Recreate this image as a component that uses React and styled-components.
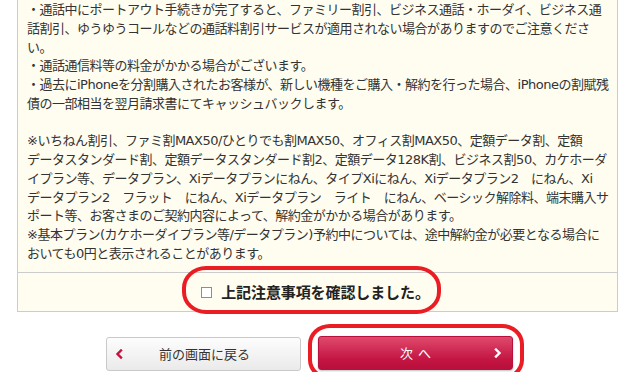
import React from "react";
import styled, { createGlobalStyle } from "styled-components";

const Global = createGlobalStyle`
  html, body { margin: 0; padding: 0; background: #ffffff; }
  body { font-family: "DejaVu Sans", "Noto Sans CJK JP", sans-serif; color: #333; overflow: hidden; }
`;

const Page = styled.div`
  width: 630px;
  height: 372px;
  overflow: hidden;
  display: flex;
  flex-direction: column;
`;

const Panel = styled.div`
  margin: 0 12px 0 17px;
  background: #fffdef;
  border: 1px solid #cccccc;
  border-top: none;
  display: flex;
  flex-direction: column;
`;

const Notes = styled.div`
  padding: 1px 0 8px 9px;
  font-size: 13px;
  letter-spacing: -0.5px;
  line-height: 18.75px;
  color: #333;
  white-space: nowrap;
`;

const Line = styled.div`
  min-height: 18.75px;
`;

const ConfirmRow = styled.div`
  position: relative;
  border-top: 1px solid #cccccc;
  height: 38px;
  display: flex;
  align-items: center;
  justify-content: center;
  gap: 9px;
  padding-right: 4px;
`;

const CheckBox = styled.span`
  width: 9px;
  height: 9px;
  border: 1px solid #45a3e3;
  background: #fff;
  margin-top: 1px;
`;

const ConfirmText = styled.span`
  font-family: "Noto Sans CJK JP", sans-serif;
  font-size: 15px;
  letter-spacing: -0.1px;
  font-weight: 700;
  color: #222;
`;

const Annotation = styled.div`
  position: absolute;
  border: 4px solid #ea1c24;
  border-radius: ${(p) => p.$r || "22px"};
  pointer-events: none;
  box-sizing: border-box;
`;

const ButtonRow = styled.div`
  display: flex;
  align-items: flex-start;
  gap: 17px;
  padding: 25px 0 0 106px;
  position: relative;
`;

const Button = styled.div`
  position: relative;
  box-sizing: border-box;
  width: 195px;
  height: 34px;
  border-radius: 3px;
  display: flex;
  align-items: center;
  justify-content: center;
  font-family: "Noto Sans CJK JP", sans-serif;
  font-size: 13px;
  ${(p) =>
    p.$primary
      ? `
    margin-top: -1px;
    color: #fff;
    background: linear-gradient(#df4a6c, #c41543 70%, #b80f3b);
    border: 1px solid #b8103a;
    box-shadow: 0 1px 2px rgba(0,0,0,0.25);
    letter-spacing: 5px;
    padding-left: 5px;
  `
      : `
    color: #333;
    background: linear-gradient(#fdfdfd, #eaeaea);
    border: 1px solid #c9c9c9;
    padding-left: 2px;
  `}
`;

const Chevron = styled.span`
  position: absolute;
  top: 50%;
  transform: translateY(-50%);
  ${(p) => (p.$right ? "right: 10px;" : "left: 8px;")}
  display: flex;
`;

const ChevronIcon = ({ dir, color }) => (
  <svg width="8" height="10" viewBox="0 0 8 10">
    <path
      d={dir === "left" ? "M6 1.5 L2.5 5 L6 8.5" : "M2 1.5 L5.5 5 L2 8.5"}
      fill="none"
      stroke={color}
      strokeWidth="2.4"
      strokeLinecap="square"
    />
  </svg>
);

const lines1 = [
  "・通話中にポートアウト手続きが完了すると、ファミリー割引、ビジネス通話・ホーダイ、ビジネス通",
  "話割引、ゆうゆうコールなどの通話料割引サービスが適用されない場合がありますのでご注意くださ",
  "い。",
  "・通話通信料等の料金がかかる場合がございます。",
  "・過去にiPhoneを分割購入されたお客様が、新しい機種をご購入・解約を行った場合、iPhoneの割賦残",
  "債の一部相当を翌月請求書にてキャッシュバックします。",
  "",
  "※いちねん割引、ファミ割MAX50/ひとりでも割MAX50、オフィス割MAX50、定額データ割、定額",
  "データスタンダード割、定額データスタンダード割2、定額データ128K割、ビジネス割50、カケホーダ",
  "イプラン等、データプラン、Xiデータプランにねん、タイプXiにねん、Xiデータプラン2　にねん、Xi",
  "データプラン2　フラット　にねん、Xiデータプラン　ライト　にねん、ベーシック解除料、端末購入サ",
  "ポート等、お客さまのご契約内容によって、解約金がかかる場合があります。",
  "※基本プラン(カケホーダイプラン等/データプラン)予約中については、途中解約金が必要となる場合に",
  "おいても0円と表示されることがあります。",
];

export default function App() {
  return (
    <Page>
      <Global />
      <Panel>
        <Notes>
          {lines1.map((l, i) => (
            <Line key={i}>{l}</Line>
          ))}
        </Notes>
        <ConfirmRow>
          <CheckBox />
          <ConfirmText>上記注意事項を確認しました。</ConfirmText>
          <Annotation
            style={{ left: 164, top: -7, width: 259, height: 48 }}
            $r="24px / 22px"
          />
        </ConfirmRow>
      </Panel>
      <ButtonRow>
        <Button>
          <Chevron>
            <ChevronIcon dir="left" color="#c8103c" />
          </Chevron>
          前の画面に戻る
        </Button>
        <Button $primary>
          次へ
          <Chevron $right>
            <ChevronIcon dir="right" color="#ffffff" />
          </Chevron>
        </Button>
        <Annotation
          style={{ left: 308, top: 12, width: 216, height: 56 }}
          $r="22px / 20px"
        />
      </ButtonRow>
    </Page>
  );
}
